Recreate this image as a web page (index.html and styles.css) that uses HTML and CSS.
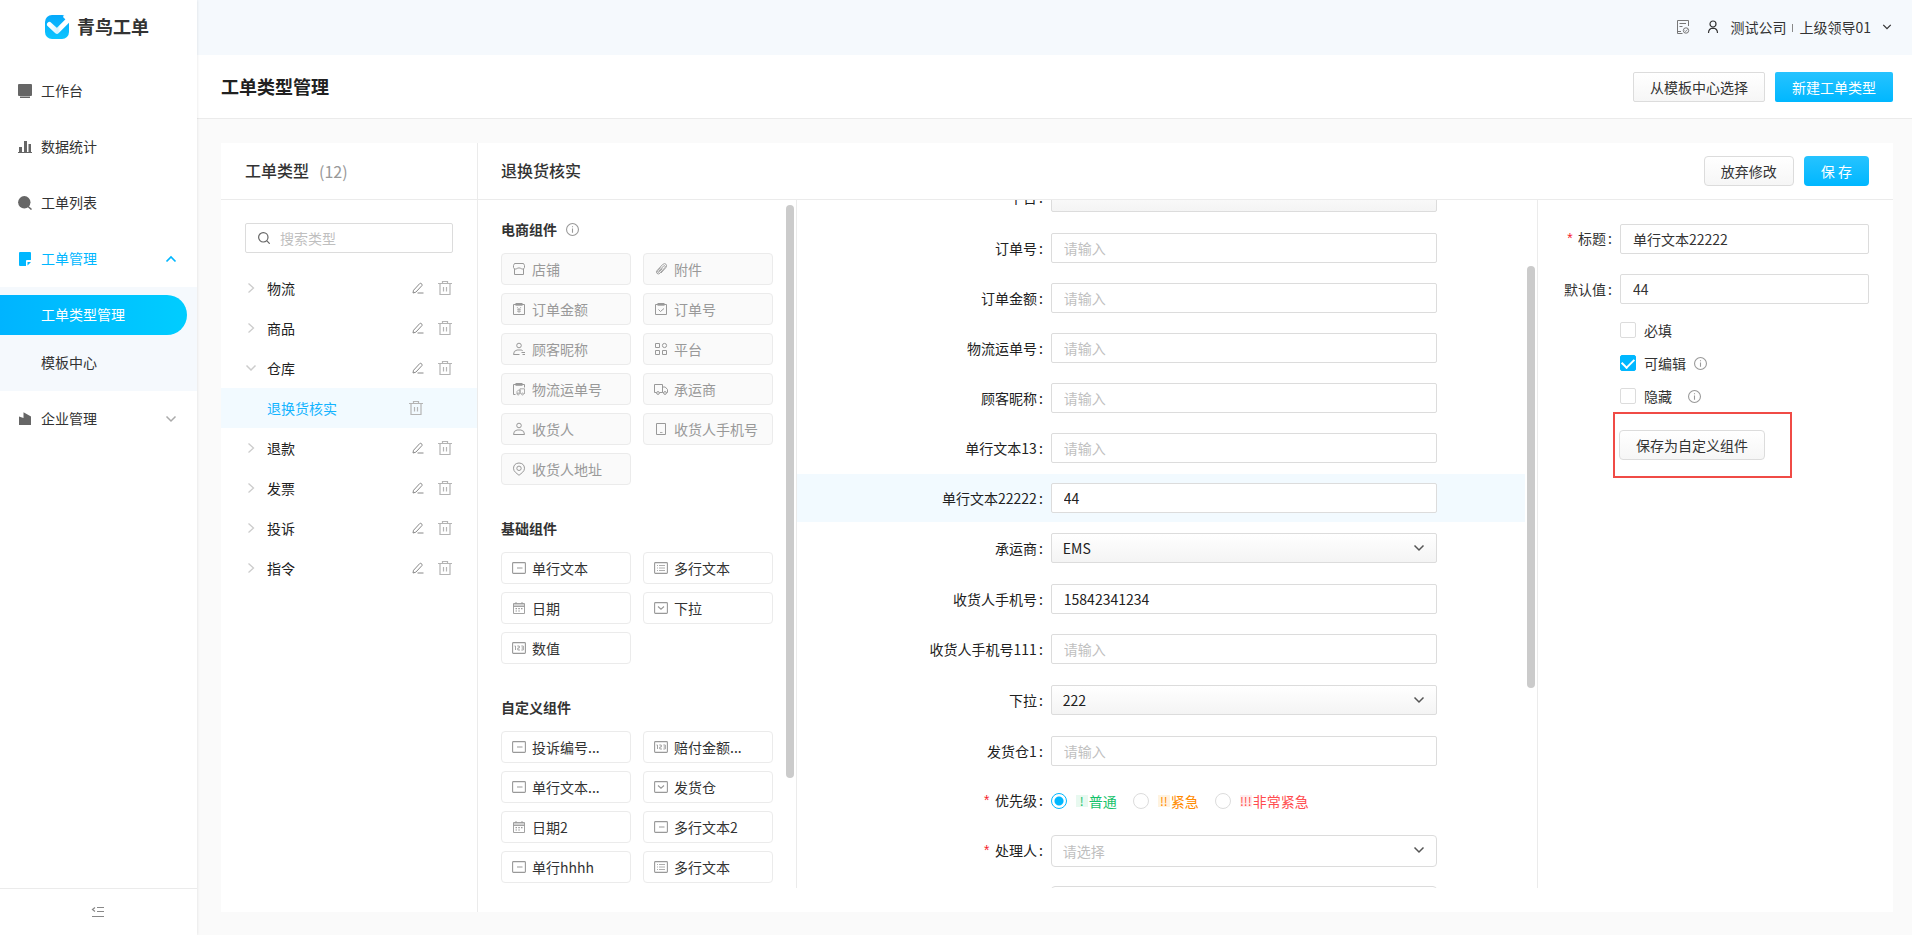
FILE: index.html
```html
<!DOCTYPE html>
<html lang="zh-CN">
<head>
<meta charset="utf-8">
<meta name="viewport" content="width=device-width, initial-scale=1">
<title>青鸟工单</title>
<link rel="stylesheet" href="styles.css">
</head>
<body>
<svg class="sprite" aria-hidden="true">
  <defs>
    <linearGradient id="logo-bg" x1="0" y1="0" x2="0" y2="1"><stop offset="0" stop-color="#06a9fb"/><stop offset="1" stop-color="#0cc5ff"/></linearGradient>
    <linearGradient id="logo-tick" x1="0" y1="0" x2="1" y2="0"><stop offset="0" stop-color="#fff"/><stop offset=".45" stop-color="#d5f3ff"/><stop offset=".6" stop-color="#fff"/></linearGradient>
  </defs>
  <symbol id="i-down" viewBox="0 0 12 12"><path d="M1.500 3.500 6 8l4.500-4.500" fill="none" stroke="currentColor" stroke-width="1.500"/></symbol>
  <symbol id="i-up" viewBox="0 0 12 12"><path d="M1.500 8.500 6 4l4.500 4.500" fill="none" stroke="currentColor" stroke-width="1.700"/></symbol>
  <symbol id="i-right" viewBox="0 0 12 12"><path d="M3.500 1.500 8.500 6l-5 4.500" fill="none" stroke="currentColor" stroke-width="1.300"/></symbol>
  <symbol id="i-edit" viewBox="0 0 12 12"><path d="M1.500 8.300 7.800 1.500q.6-.5 1.200 0l1 .8q.5.600 0 1.200L3.800 10.200l-2.800.8zM5.500 11h6" fill="none" stroke="currentColor"/></symbol>
  <symbol id="i-trash" viewBox="0 0 14 14"><path d="M0 2.500h14M4.500 2.500v-2h5v2M2 2.500v11h10v-11M5.500 6v4.500M8.500 6v4.500" fill="none" stroke="currentColor" stroke-width="1.200"/></symbol>
  <symbol id="i-info" viewBox="0 0 12 12"><circle cx="6" cy="6" r="5.500" fill="none" stroke="currentColor"/><path d="M6 5v4M6 3v1" stroke="currentColor"/></symbol>
  <symbol id="i-search" viewBox="0 0 12 12"><circle cx="5.300" cy="5.300" r="4.700" fill="none" stroke="currentColor" stroke-width="1.200"/><path d="m8.700 8.700 3 3" stroke="currentColor" stroke-width="1.200"/></symbol>
  <symbol id="i-shop" viewBox="0 0 14 14"><path d="M2.500 1.500h9l1 2v2q-.3 1.500-1.800 1.500H9.500l-1-1h-3l-1 1H3.200q-1.500 0-1.700-1.500v-2zM2.500 7v5.500h9V7" fill="none" stroke="currentColor"/></symbol>
  <symbol id="i-clip" viewBox="0 0 14 14"><path d="m4.500 9.500 5-5.500q1-.8 1.600 0 .6.700-.2 1.600L6 11.200q-1.600 1.500-3 .2-1.300-1.400.2-3l5.300-5.800q2-1.800 3.500-.4 1.400 1.600-.2 3.500L7 11M6.500 5.500l-2.700 3q-.8 1 0 1.700.7.500 1.500-.3l3-3.300" fill="none" stroke="currentColor" stroke-width=".9"/></symbol>
  <symbol id="i-money" viewBox="0 0 14 14"><path d="M1.500 2.500h11v10h-11zM3.500 1.500h7" fill="none" stroke="currentColor"/><path d="M3.500 3.500h7M5 5l2 2.500L9 5M7 7.500V11M5 7.700h4M5 9.300h4" fill="none" stroke="currentColor" stroke-width=".7"/></symbol>
  <symbol id="i-order" viewBox="0 0 14 14"><path d="M1.500 2.500h11v10h-11zM3.500 1.500h7M4.500 7.500l2 2 3.500-3" fill="none" stroke="currentColor"/><path d="M3.500 3.500h7" stroke="currentColor" stroke-width=".7"/></symbol>
  <symbol id="i-nick" viewBox="0 0 14 14"><circle cx="7" cy="3.500" r="2.300" fill="none" stroke="currentColor"/><path d="M7.500 12.500h-6q0-4 3.500-4.500h4q1 .1 1.700.7M9.500 10.500h3.500M10.500 12.500H13" fill="none" stroke="currentColor"/></symbol>
  <symbol id="i-grid" viewBox="0 0 14 14"><path d="M1.500 1.500h4v4h-4zM1.500 8.500h4v4h-4zM8.500 8.500h4v4h-4z" fill="none" stroke="currentColor"/><circle cx="10.500" cy="3.500" r="2.100" fill="none" stroke="currentColor"/></symbol>
  <symbol id="i-waybill" viewBox="0 0 14 14"><path d="M3.500 12.500h-2v-10h11v3M3.500 1.500h7" fill="none" stroke="currentColor"/><path d="M3.500 3.500h7M5 12V9.500L6.500 8H8v4M8 12V6.800h4.500V12" fill="none" stroke="currentColor" stroke-width=".8"/><circle cx="6.200" cy="12" r="1" fill="none" stroke="currentColor" stroke-width=".8"/><circle cx="10.500" cy="12" r="1" fill="none" stroke="currentColor" stroke-width=".8"/></symbol>
  <symbol id="i-truck" viewBox="0 0 14 14"><path d="M2.500 10.500h-2v-8h8v8h-3M8.500 5h2.700l2.300 2.500v3h-1M8.500 10.500h1" fill="none" stroke="currentColor"/><circle cx="4" cy="11" r="1.400" fill="none" stroke="currentColor"/><circle cx="11" cy="11" r="1.400" fill="none" stroke="currentColor"/></symbol>
  <symbol id="i-person" viewBox="0 0 14 14"><circle cx="7" cy="3.500" r="2.300" fill="none" stroke="currentColor"/><path d="M1.500 12.500q0-4 3.500-4.500h4q3.500.5 3.500 4.500z" fill="none" stroke="currentColor"/></symbol>
  <symbol id="i-phone" viewBox="0 0 14 14"><path d="M2.500 1.500h9v11h-9z" fill="none" stroke="currentColor"/><path d="M6 10.500h2.500" stroke="currentColor" stroke-width=".8"/></symbol>
  <symbol id="i-pin" viewBox="0 0 14 14"><path d="M7 13.300 3.500 10.400Q1.500 8.600 1.500 6.200 1.800 1.300 7 1q5.200.3 5.500 5.200 0 2.400-2 4.200z" fill="none" stroke="currentColor"/><circle cx="7" cy="6.300" r="2.200" fill="none" stroke="currentColor"/></symbol>
  <symbol id="i-line" viewBox="0 0 14 14"><rect x=".6" y="1.600" width="12.800" height="10.800" rx=".8" fill="none" stroke="currentColor" stroke-width="1.100"/><path d="M5 7h5.500" stroke="currentColor"/></symbol>
  <symbol id="i-lines" viewBox="0 0 14 14"><rect x=".6" y="1.600" width="12.800" height="10.800" rx=".8" fill="none" stroke="currentColor" stroke-width="1.100"/><path d="M3 4.500h1M5 4.500h6M3 7h1M5 7h6M3 9.500h1M5 9.500h6" stroke="currentColor" stroke-width=".8"/></symbol>
  <symbol id="i-cal" viewBox="0 0 14 14"><path d="M1.500 2.500h11v10h-11zM1.500 5.500h11M1.500 4h11M4 1v2M10 1v2" fill="none" stroke="currentColor" stroke-width=".9"/><path d="M3.500 7.700H5M6.300 7.700h1.500M9 7.700h1.500M3.500 10H5M6.300 10h1.500" stroke="currentColor" stroke-width="1.200"/></symbol>
  <symbol id="i-drop" viewBox="0 0 14 14"><rect x=".6" y="1.600" width="12.800" height="10.800" rx=".8" fill="none" stroke="currentColor" stroke-width="1.100"/><path d="M4 5.500 7 8.200l3-2.700" fill="none" stroke="currentColor" stroke-width="1.100"/></symbol>
  <symbol id="i-num" viewBox="0 0 14 14"><rect x=".6" y="1.600" width="12.800" height="10.800" rx=".8" fill="none" stroke="currentColor" stroke-width="1.100"/><path d="M2.500 5h1v4M5.300 5h2v2h-1.500v2H8M9.300 5h2v4h-2M9.600 7h1.700" fill="none" stroke="currentColor" stroke-width=".9"/></symbol>
</svg>
<div class="app">
  <aside class="sidebar">
    <div class="brand">
      <svg width="24" height="24" viewBox="0 0 24 24" aria-hidden="true"><rect width="24" height="24" rx="7" fill="url(#logo-bg)"/><path d="M19 0q4 .5 5 4l-2 2-4-4z" fill="#fff"/><path d="m4.500 9.500 7.500 6.800L23 5.300" fill="none" stroke="url(#logo-tick)" stroke-width="5" stroke-linecap="round" stroke-linejoin="round"/></svg>
      <span>青鸟工单</span>
    </div>
    <nav class="menu">
      <a class="menu-item" href="#"><svg width="14" height="14" viewBox="0 0 14 14"><path d="M1 0h12q1 0 1 1v10q0 1-1 1H1q-1 0-1-1V1q0-1 1-1zM2 12.600h10V14H2z" fill="currentColor"/></svg><span>工作台</span></a>
      <a class="menu-item" href="#"><svg width="14" height="14" viewBox="0 0 14 14"><path d="M1 7h3v5H1zM6 1h3v11H6zM10.500 4h2.500v8h-2.500zM0 12h14v1H0z" fill="currentColor"/></svg><span>数据统计</span></a>
      <a class="menu-item" href="#"><svg width="14" height="14" viewBox="0 0 14 14"><circle cx="6.300" cy="6.300" r="6.200" fill="currentColor"/><path d="m9.500 10 4 3.500" stroke="currentColor" stroke-width="1.500"/></svg><span>工单列表</span></a>
      <a class="menu-item is-open" href="#"><svg width="14" height="14" viewBox="0 0 14 14"><path d="M2 0h10q1 0 1 1v7H9q-1 0-1 1v5H2q-1 0-1-1V1q0-1 1-1zM9.500 10H13l-3.500 3.500z" fill="currentColor"/></svg><span>工单管理</span><svg class="arrow" width="12" height="12"><use href="#i-up"/></svg></a>
      <div class="submenu">
        <a class="submenu-item is-active" href="#">工单类型管理</a>
        <a class="submenu-item" href="#">模板中心</a>
      </div>
      <a class="menu-item" href="#"><svg width="14" height="14" viewBox="0 0 14 14"><path d="M1 4.500 5.500 6V.3L13 4.500V13H1z" fill="currentColor"/></svg><span>企业管理</span><svg class="arrow" width="12" height="12"><use href="#i-down"/></svg></a>
    </nav>
    <div class="sidebar-foot">
      <button class="icon-btn" type="button" aria-label="收起菜单"><svg width="14" height="12" viewBox="0 0 14 12"><path d="M6 1.500h7M6 5.500h7M1 10.500h12M4 1.500l-2.500 2L4 5.500" fill="none" stroke="currentColor" stroke-width="1.200"/></svg></button>
    </div>
  </aside>

  <div class="main">
    <header class="topbar">
      <svg class="doc-icon" width="14" height="14" viewBox="0 0 14 14"><path d="M6.500 13.500h-5V.5h11V6M3.500 3.500h6.500M3.500 6.500h3M1.500 11.500H5" fill="none" stroke="currentColor"/><circle cx="10" cy="10.500" r="2.700" fill="none" stroke="currentColor"/><path d="m8.500 10.500 1.200 1 1.800-2" fill="none" stroke="currentColor" stroke-width=".8"/></svg>
      <svg class="user-icon" width="12" height="14" viewBox="0 0 12 14"><circle cx="6" cy="4" r="3" fill="none" stroke="currentColor" stroke-width="1.200"/><path d="M1.500 13q0-4.500 4.500-4.800 4.500.3 4.500 4.800" fill="none" stroke="currentColor" stroke-width="1.200"/></svg>
      <span>测试公司</span><i class="divider"></i><span>上级领导01</span>
      <svg class="top-arrow" width="10" height="10"><use href="#i-down"/></svg>
    </header>
    <div class="titlebar">
      <h1>工单类型管理</h1>
      <div class="actions">
        <button class="btn" type="button">从模板中心选择</button>
        <button class="btn primary" type="button">新建工单类型</button>
      </div>
    </div>
    <main class="content">
      <div class="card">
        <section class="types">
          <div class="panel-head"><h2>工单类型</h2><span class="count">(12)</span></div>
          <label class="search"><svg width="12" height="12"><use href="#i-search"/></svg><input type="text" placeholder="搜索类型" aria-label="搜索类型"></label>
          <ul class="tree">
            <li><svg class="twist" width="12" height="12"><use href="#i-right"/></svg><span>物流</span><button class="icon-btn edit" type="button" aria-label="编辑"><svg width="12" height="12"><use href="#i-edit"/></svg></button><button class="icon-btn del" type="button" aria-label="删除"><svg width="14" height="14"><use href="#i-trash"/></svg></button></li>
            <li><svg class="twist" width="12" height="12"><use href="#i-right"/></svg><span>商品</span><button class="icon-btn edit" type="button" aria-label="编辑"><svg width="12" height="12"><use href="#i-edit"/></svg></button><button class="icon-btn del" type="button" aria-label="删除"><svg width="14" height="14"><use href="#i-trash"/></svg></button></li>
            <li><svg class="twist" width="12" height="12"><use href="#i-down"/></svg><span>仓库</span><button class="icon-btn edit" type="button" aria-label="编辑"><svg width="12" height="12"><use href="#i-edit"/></svg></button><button class="icon-btn del" type="button" aria-label="删除"><svg width="14" height="14"><use href="#i-trash"/></svg></button></li>
            <li class="is-active"><span>退换货核实</span><button class="icon-btn del" type="button" aria-label="删除"><svg width="14" height="14"><use href="#i-trash"/></svg></button></li>
            <li><svg class="twist" width="12" height="12"><use href="#i-right"/></svg><span>退款</span><button class="icon-btn edit" type="button" aria-label="编辑"><svg width="12" height="12"><use href="#i-edit"/></svg></button><button class="icon-btn del" type="button" aria-label="删除"><svg width="14" height="14"><use href="#i-trash"/></svg></button></li>
            <li><svg class="twist" width="12" height="12"><use href="#i-right"/></svg><span>发票</span><button class="icon-btn edit" type="button" aria-label="编辑"><svg width="12" height="12"><use href="#i-edit"/></svg></button><button class="icon-btn del" type="button" aria-label="删除"><svg width="14" height="14"><use href="#i-trash"/></svg></button></li>
            <li><svg class="twist" width="12" height="12"><use href="#i-right"/></svg><span>投诉</span><button class="icon-btn edit" type="button" aria-label="编辑"><svg width="12" height="12"><use href="#i-edit"/></svg></button><button class="icon-btn del" type="button" aria-label="删除"><svg width="14" height="14"><use href="#i-trash"/></svg></button></li>
            <li><svg class="twist" width="12" height="12"><use href="#i-right"/></svg><span>指令</span><button class="icon-btn edit" type="button" aria-label="编辑"><svg width="12" height="12"><use href="#i-edit"/></svg></button><button class="icon-btn del" type="button" aria-label="删除"><svg width="14" height="14"><use href="#i-trash"/></svg></button></li>
          </ul>
        </section>

        <section class="editor">
          <div class="panel-head">
            <h2>退换货核实</h2>
            <div class="actions">
              <button class="btn round" type="button">放弃修改</button>
              <button class="btn round primary" type="button">保 存</button>
            </div>
          </div>
          <div class="editor-body">
            <div class="palette">
              <div class="palette-list">
                <section>
                  <h3>电商组件<svg width="13" height="13"><use href="#i-info"/></svg></h3>
                  <div class="tiles">
                    <button class="tile" type="button" disabled><svg width="14" height="14"><use href="#i-shop"/></svg>店铺</button>
                    <button class="tile" type="button" disabled><svg width="14" height="14"><use href="#i-clip"/></svg>附件</button>
                    <button class="tile" type="button" disabled><svg width="14" height="14"><use href="#i-money"/></svg>订单金额</button>
                    <button class="tile" type="button" disabled><svg width="14" height="14"><use href="#i-order"/></svg>订单号</button>
                    <button class="tile" type="button" disabled><svg width="14" height="14"><use href="#i-nick"/></svg>顾客昵称</button>
                    <button class="tile" type="button" disabled><svg width="14" height="14"><use href="#i-grid"/></svg>平台</button>
                    <button class="tile" type="button" disabled><svg width="14" height="14"><use href="#i-waybill"/></svg>物流运单号</button>
                    <button class="tile" type="button" disabled><svg width="14" height="14"><use href="#i-truck"/></svg>承运商</button>
                    <button class="tile" type="button" disabled><svg width="14" height="14"><use href="#i-person"/></svg>收货人</button>
                    <button class="tile" type="button" disabled><svg width="14" height="14"><use href="#i-phone"/></svg>收货人手机号</button>
                    <button class="tile" type="button" disabled><svg width="14" height="14"><use href="#i-pin"/></svg>收货人地址</button>
                  </div>
                </section>
                <section>
                  <h3>基础组件</h3>
                  <div class="tiles">
                    <button class="tile" type="button"><svg width="14" height="14"><use href="#i-line"/></svg>单行文本</button>
                    <button class="tile" type="button"><svg width="14" height="14"><use href="#i-lines"/></svg>多行文本</button>
                    <button class="tile" type="button"><svg width="14" height="14"><use href="#i-cal"/></svg>日期</button>
                    <button class="tile" type="button"><svg width="14" height="14"><use href="#i-drop"/></svg>下拉</button>
                    <button class="tile" type="button"><svg width="14" height="14"><use href="#i-num"/></svg>数值</button>
                  </div>
                </section>
                <section>
                  <h3>自定义组件</h3>
                  <div class="tiles">
                    <button class="tile" type="button"><svg width="14" height="14"><use href="#i-line"/></svg>投诉编号...</button>
                    <button class="tile" type="button"><svg width="14" height="14"><use href="#i-num"/></svg>赔付金额...</button>
                    <button class="tile" type="button"><svg width="14" height="14"><use href="#i-line"/></svg>单行文本...</button>
                    <button class="tile" type="button"><svg width="14" height="14"><use href="#i-drop"/></svg>发货仓</button>
                    <button class="tile" type="button"><svg width="14" height="14"><use href="#i-cal"/></svg>日期2</button>
                    <button class="tile" type="button"><svg width="14" height="14"><use href="#i-line"/></svg>多行文本2</button>
                    <button class="tile" type="button"><svg width="14" height="14"><use href="#i-line"/></svg>单行hhhh</button>
                    <button class="tile" type="button"><svg width="14" height="14"><use href="#i-lines"/></svg>多行文本</button>
                  </div>
                </section>
              </div>
              <i class="thumb thumb-palette"></i>
            </div>

            <div class="preview">
              <form class="form">
                <div class="row tall"><label for="f-plat">平台<b>:</b></label><div class="select"><select id="f-plat"><option></option></select><svg width="12" height="12"><use href="#i-down"/></svg></div></div>
                <div class="row"><label for="f-no">订单号<b>:</b></label><input id="f-no" type="text" placeholder="请输入"></div>
                <div class="row"><label for="f-amt">订单金额<b>:</b></label><input id="f-amt" type="text" placeholder="请输入"></div>
                <div class="row"><label for="f-way">物流运单号<b>:</b></label><input id="f-way" type="text" placeholder="请输入"></div>
                <div class="row"><label for="f-nick">顾客昵称<b>:</b></label><input id="f-nick" type="text" placeholder="请输入"></div>
                <div class="row"><label for="f-t13">单行文本13<b>:</b></label><input id="f-t13" type="text" placeholder="请输入"></div>
                <div class="row is-active"><label for="f-t2">单行文本22222<b>:</b></label><input id="f-t2" type="text" value="44"></div>
                <div class="row tall"><label for="f-car">承运商<b>:</b></label><div class="select"><select id="f-car"><option>EMS</option></select><svg width="12" height="12"><use href="#i-down"/></svg></div></div>
                <div class="row"><label for="f-tel">收货人手机号<b>:</b></label><input id="f-tel" type="text" value="15842341234"></div>
                <div class="row tall"><label for="f-tel1">收货人手机号111<b>:</b></label><input id="f-tel1" type="text" placeholder="请输入"></div>
                <div class="row tall"><label for="f-drop">下拉<b>:</b></label><div class="select"><select id="f-drop"><option>222</option></select><svg width="12" height="12"><use href="#i-down"/></svg></div></div>
                <div class="row"><label for="f-wh">发货仓1<b>:</b></label><input id="f-wh" type="text" placeholder="请输入"></div>
                <div class="row short" role="radiogroup" aria-labelledby="f-pri"><span class="label" id="f-pri"><em>*</em>优先级<b>:</b></span>
                  <div class="radios">
                    <label class="green"><input type="radio" name="pri" checked><span class="badge">!</span><span>普通</span></label>
                    <label class="orange"><input type="radio" name="pri"><span class="badge">!!</span><span>紧急</span></label>
                    <label class="red"><input type="radio" name="pri"><span class="badge">!!!</span><span>非常紧急</span></label>
                  </div>
                </div>
                <div class="row short"><label for="f-who"><em>*</em>处理人<b>:</b></label><div class="select plain"><select id="f-who"><option>请选择</option></select><svg width="12" height="12"><use href="#i-down"/></svg></div></div>
                <div class="row"><span></span><div class="select plain"><select aria-label="抄送人"><option></option></select></div></div>
              </form>
              <i class="thumb thumb-form"></i>
            </div>

            <form class="props">
              <div class="prop"><label for="p-title"><em>*</em>标题<b>:</b></label><input id="p-title" type="text" value="单行文本22222"></div>
              <div class="prop"><label for="p-def">默认值<b>:</b></label><input id="p-def" type="text" value="44"></div>
              <div class="checks">
                <label><input type="checkbox"><span>必填</span></label>
                <label><input type="checkbox" checked><span>可编辑</span><svg width="13" height="13"><use href="#i-info"/></svg></label>
                <label class="wide"><input type="checkbox"><span>隐藏</span><svg width="13" height="13"><use href="#i-info"/></svg></label>
              </div>
              <div class="callout"><button class="btn round" type="button">保存为自定义组件</button></div>
            </form>
          </div>
        </section>
      </div>
    </main>
  </div>
</div>
</body>
</html>
```
FILE: styles.css
```css
* { box-sizing: border-box; }
body {
  margin: 0;
  color: #333;
  font: 14px/22px "Noto Sans CJK SC", "Noto Sans", sans-serif;
}
h1, h2, h3, ul { margin: 0; padding: 0; }
button, input, select { font: inherit; color: inherit; }
a { color: inherit; text-decoration: none; }
svg { flex: none; display: block; }
b { font-weight: 400; margin: 0 8px 0 2px; }
em { margin-right: 4px; color: #f5222d; font-family: "Liberation Mono", monospace; font-style: normal; }
.sprite { position: absolute; width: 0; height: 0; }

.app { display: flex; height: 100vh; background: #fafafa; }

/* Sidebar */
.sidebar {
  display: flex;
  flex-direction: column;
  flex: none;
  width: 197px;
  background: #fff;
  box-shadow: 0 0 3px rgba(0, 0, 0, .12);
  z-index: 1;
}
.brand {
  display: flex;
  align-items: center;
  gap: 8px;
  height: 54px;
  padding-left: 45px;
  font-size: 18px;
  font-weight: 700;
}
.brand span, .menu-item span { padding-bottom: 2px; }
.menu { flex: 1; padding-top: 9px; }
.menu-item {
  display: flex;
  align-items: center;
  gap: 9px;
  height: 56px;
  padding: 0 20px 0 18px;
}
.menu-item svg { color: #666; }
.menu-item .arrow { margin-left: auto; color: #aaa; }
.menu-item.is-open, .menu-item.is-open svg { color: #00b7ff; }
.submenu {
  display: grid;
  gap: 8px;
  padding: 8px 10px 8px 0;
  background: #f5f9fd;
}
.submenu-item { padding: 8px 0 10px 41px; }
.submenu-item.is-active {
  color: #fff;
  background: linear-gradient(90deg, #00b4ff, #00cdff);
  border-radius: 0 20px 20px 0;
}
.sidebar-foot {
  display: flex;
  justify-content: center;
  height: 47px;
  padding-right: 2px;
  border-top: 1px solid #ebebeb;
  color: #888;
}
.icon-btn { padding: 0; border: 0; background: none; }

/* Top */
.main { display: flex; flex-direction: column; flex: 1; min-width: 0; }
.topbar {
  display: flex;
  align-items: center;
  justify-content: flex-end;
  height: 55px;
  padding: 0 20px 2px 0;
  background: #f5f9fd;
}
.doc-icon { color: #777; margin-right: 17px; }
.user-icon { margin-right: 11px; }
.divider { width: 1px; height: 8px; margin: 2px 6px 0; background: #888; }
.top-arrow { margin-left: 11px; }
.titlebar {
  display: flex;
  align-items: center;
  justify-content: space-between;
  height: 64px;
  padding: 0 19px 0 24px;
  background: #fff;
  border-bottom: 1px solid #ebebeb;
}
h1 { padding-bottom: 2px; font-size: 18px; font-weight: 700; color: #212121; }
.actions { display: flex; gap: 10px; }
.btn {
  height: 30px;
  padding: 0 16px;
  line-height: 20px;
  border: 1px solid #dcdcdc;
  border-radius: 2px;
  background: linear-gradient(#fff, #f6f6f6);
  white-space: nowrap;
}
.btn.round { border-radius: 4px; }
.btn.primary {
  color: #fff;
  border-color: transparent;
  background: linear-gradient(#26c3ff, #00b7ff) border-box;
}

/* Card */
.content { display: flex; flex: 1; min-height: 0; padding: 24px 19px 23px 24px; }
.card { display: flex; flex: 1; min-width: 0; background: #fff; }
.types { flex: none; width: 257px; border-right: 1px solid #ebebeb; }
.panel-head {
  display: flex;
  align-items: center;
  justify-content: space-between;
  height: 57px;
  padding: 0 24px 0 23px;
  border-bottom: 1px solid #ebebeb;
}
.types .panel-head { justify-content: flex-start; gap: 10px; padding-left: 24px; }
.panel-head h2 { padding-bottom: 2px; font-size: 16px; font-weight: 500; }
.count { color: #999; font-size: 16px; }
.search {
  display: flex;
  align-items: center;
  gap: 10px;
  height: 30px;
  margin: 23px 24px 15px;
  padding: 0 12px;
  border: 1px solid #dcdcdc;
  border-radius: 2px;
  color: #666;
}
.search input { flex: 1; min-width: 0; padding: 0; border: 0; outline: 0; }
::placeholder { color: #bfbfbf; opacity: 1; }
.tree { list-style: none; }
.tree li {
  display: flex;
  align-items: center;
  height: 40px;
  padding: 0 25px 0 24px;
  color: #212121;
}
.twist { margin-right: 10px; color: #ccc; }
.edit { margin-left: auto; color: #888; }
.del { margin-left: 14px; color: #b5b5b5; }
.tree .is-active { padding: 0 54px 0 46px; color: #14b4ff; background: #f2faff; }
.tree .is-active .del { margin-left: auto; }

.editor { display: flex; flex-direction: column; flex: 1; min-width: 0; }
.editor-body { display: flex; flex: 1; min-height: 0; padding-bottom: 24px; }

/* Component palette */
.palette { position: relative; flex: none; width: 319px; border-right: 1px solid #ebebeb; }
.palette-list {
  display: grid;
  align-content: start;
  gap: 32px;
  height: 100%;
  padding: 18px 23px 0;
  overflow: hidden;
}
h3 {
  display: flex;
  align-items: center;
  gap: 9px;
  margin-bottom: 13px;
  font-size: 14px;
  font-weight: 700;
}
h3 svg { color: #999; }
.tiles { display: grid; grid-template-columns: 1fr 1fr; gap: 8px 12px; }
.tile {
  display: flex;
  align-items: center;
  gap: 6px;
  height: 32px;
  padding: 0 10px;
  border: 1px solid #ebebeb;
  border-radius: 4px;
  background: #fff;
  white-space: nowrap;
}
.tile svg { color: #999; }
.tile:disabled { color: #999; background: #fafafa; }
.thumb { position: absolute; right: 2px; width: 8px; border-radius: 4px; background: #cbcbcb; }
.thumb-palette { top: 5px; bottom: 16%; }
.thumb-form { top: 66px; bottom: 29%; }

/* Form preview */
.preview { position: relative; flex: 1; min-width: 0; overflow: hidden; }
.form { display: grid; gap: 2px; margin: -27px 12px 0 0; }
.row {
  display: grid;
  grid-template-columns: calc(35% - 1px) 53%;
  align-items: center;
  padding: 9px 0;
  color: #212121;
}
.row.tall { padding-bottom: 10px; }
.row.short { padding-bottom: 8px; }
.row.is-active { background: #f2faff; }
.row > label, .label { text-align: right; white-space: nowrap; }
.row > input, .prop input, select {
  width: 100%;
  height: 30px;
  padding: 0 12px;
  border: 1px solid #dcdcdc;
  border-radius: 2px;
  background: #fff;
}
.select { position: relative; }
.select svg { position: absolute; right: 12px; top: 9px; color: #555; pointer-events: none; }
select { display: block; appearance: none; padding: 0 11px; background: linear-gradient(#fff, #f4f4f4); }
.plain select { height: 32px; border-radius: 4px; color: #bfbfbf; background: #fff; }
.radios { display: flex; gap: 16px; height: 30px; }
.radios label { display: flex; align-items: center; white-space: nowrap; }
.radios input {
  appearance: none;
  width: 16px;
  height: 16px;
  margin: 0 9px 0 0;
  border: 1px solid #dcdcdc;
  border-radius: 50%;
}
.radios input:checked {
  border-color: #00b7ff;
  background: radial-gradient(circle, #00b7ff 4px, transparent 5px);
}
.badge { width: 12px; margin-right: 1px; font-size: 12px; line-height: 12px; text-align: center; }
.green { color: #13c26b; }
.green .badge { background: #e8f9f0; }
.orange { color: #ff8a00; }
.orange .badge { background: #fff3e0; }
.red { color: #ff4d4f; }
.red .badge { background: #ffeded; }

/* Field properties */
.props { flex: none; width: 356px; padding: 24px 24px 0 0; border-left: 1px solid #ebebeb; }
.prop { display: grid; grid-template-columns: 82px 1fr; align-items: center; margin-bottom: 20px; }
.prop label { text-align: right; white-space: nowrap; }
.checks { display: grid; gap: 11px; justify-items: start; margin: -5px 0 5px 82px; }
.checks label { display: flex; align-items: center; gap: 8px; }
.checks .wide svg { margin-left: 8px; }
.checks svg { color: #999; }
.checks input {
  appearance: none;
  display: grid;
  place-items: center;
  width: 16px;
  height: 16px;
  margin: 0;
  border: 1px solid #dcdcdc;
  border-radius: 2px;
}
.checks input:checked { border-color: #00b7ff; background: #00b7ff; }
.checks input:checked::before {
  content: "";
  width: 10px;
  height: 6px;
  border: solid #fff;
  border-width: 0 0 2px 2px;
  transform: translateY(-1px) rotate(-45deg);
}
.callout {
  width: 179px;
  margin-left: 75px;
  padding: 16px 4px;
  border: 2px solid #f04b46;
}
```
